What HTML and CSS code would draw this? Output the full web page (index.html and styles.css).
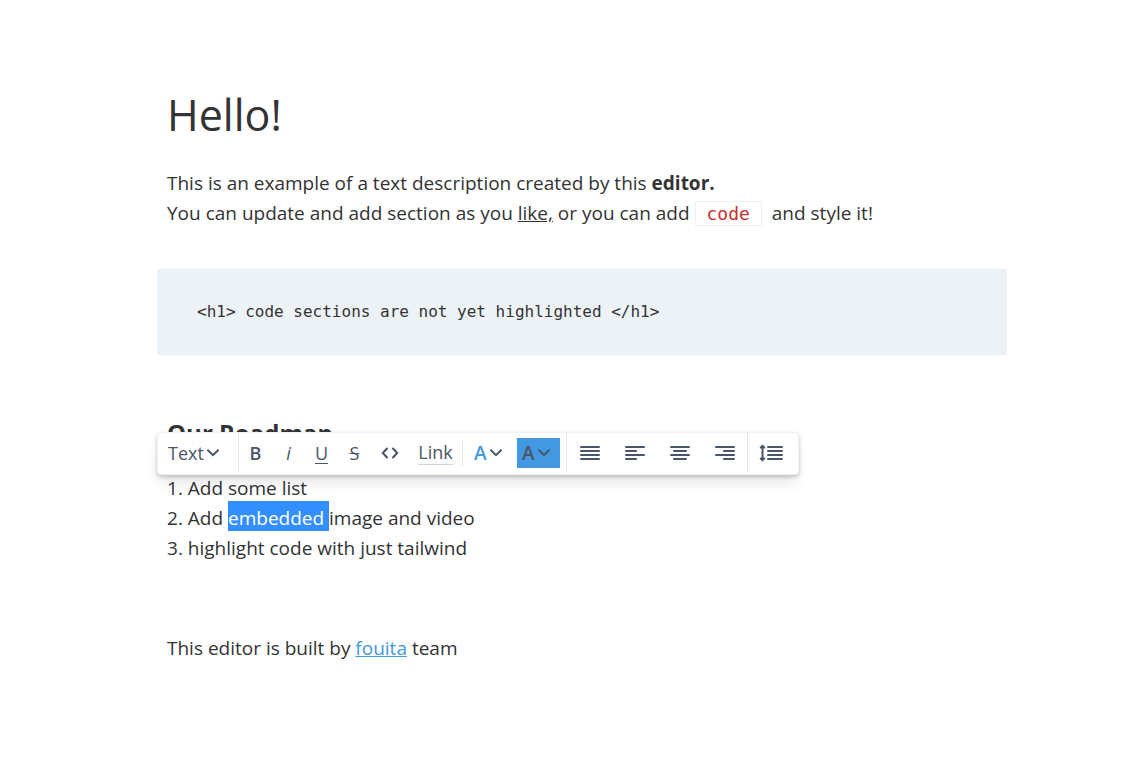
FILE: index.html
```html
<!DOCTYPE html>
<html lang="en">
<head>
    <meta charset="UTF-8">
    <meta name="viewport" content="width=device-width, initial-scale=1.0">
    <title>Text Editor</title>
    <link rel="stylesheet" href="styles.css">
</head>
<body>
    <main class="editor">
        <h1>Hello!</h1>
        <p>This is an example of a text description created by this <b>editor.</b><br>
            You can update and add section as you <u>like,</u> or you can add <code class="inline-code">code</code> and style it!</p>
        <pre class="code-block">&lt;h1&gt; code sections are not yet highlighted &lt;/h1&gt;</pre>
        <section class="roadmap">
            <h2>Our Roadmap</h2>
            <div class="toolbar" role="toolbar" aria-label="Formatting">
                <div class="group group-type">
                    <button type="button" class="dropdown">Text<svg class="chevron" width="12" height="8" viewBox="0 0 12 8"><path d="M1 1.2L6 6.2L11 1.2"/></svg></button>
                </div>
                <div class="group">
                    <button type="button" class="tool bold">B</button>
                    <button type="button" class="tool italic">i</button>
                    <button type="button" class="tool underline">U</button>
                    <button type="button" class="tool strike">S</button>
                    <button type="button" class="tool tool-code" aria-label="Code"><svg width="18" height="12" viewBox="0 0 18 12"><path d="M6 1.500L1.800 6L6 10.500M12 1.500L16.200 6L12 10.500"/></svg></button>
                    <button type="button" class="tool tool-link"><span>Link</span></button>
                </div>
                <div class="group-color">
                    <button type="button" class="dropdown color">A<svg class="chevron" width="12" height="8" viewBox="0 0 12 8"><path d="M1 1.2L6 6.2L11 1.2"/></svg></button>
                    <button type="button" class="dropdown highlight">A<svg class="chevron" width="12" height="8" viewBox="0 0 12 8"><path d="M1 1.2L6 6.2L11 1.2"/></svg></button>
                </div>
                <div class="group">
                    <button type="button" class="align" aria-label="Justify"><svg width="20" height="16" viewBox="0 0 20 16"><path d="M1 2H19M1 6H19M1 10H19M1 14H19"/></svg></button>
                    <button type="button" class="align" aria-label="Align left"><svg width="20" height="16" viewBox="0 0 20 16"><path d="M1 2H19M1 6H11M1 10H19M1 14H11"/></svg></button>
                    <button type="button" class="align" aria-label="Align center"><svg width="20" height="16" viewBox="0 0 20 16"><path d="M1 2H19M4 6H16M1 10H19M4 14H16"/></svg></button>
                    <button type="button" class="align" aria-label="Align right"><svg width="20" height="16" viewBox="0 0 20 16"><path d="M1 2H19M9 6H19M1 10H19M9 14H19"/></svg></button>
                </div>
                <div class="group">
                    <button type="button" class="align spacing" aria-label="Line height"><svg width="24" height="18" viewBox="0 0 24 18"><path d="M9 3H23M9 7H23M9 11H23M9 15H23M3.500 2V16M1.800 3.500L3.500 1.800L5.200 3.500M1.800 14.500L3.500 16.200L5.200 14.500"/></svg></button>
                </div>
            </div>
            <ol>
                <li>Add some list</li>
                <li>Add <span class="selected">embedded </span>image and video</li>
                <li>highlight code with just tailwind</li>
            </ol>
        </section>
        <p class="credit">This editor is built by <a href="#">fouita</a> team</p>
    </main>
</body>
</html>
```
FILE: styles.css
```css
* {
    box-sizing: border-box;
}

body {
    margin: 0;
    padding: 85px 0 40px 20px;
    background-color: #fff;
    color: #333;
    font-family: "Open Sans", "Noto Sans", sans-serif;
    font-size: 19px;
    line-height: 30px;
}

.editor {
    max-width: 850px;
    margin: 0 auto;
}

h1,
h2,
p,
ol {
    margin: 0;
    padding: 0 10px;
}

h1 {
    font-size: 43px;
    line-height: 60px;
    font-weight: 400;
    margin-bottom: 23px;
}

h2 {
    font-size: 24px;
    line-height: 36px;
    font-weight: 700;
}

.inline-code {
    margin-right: 5px;
    padding: 1px 11px;
    border: 1px solid #edf2f7;
    color: #c53030;
    font-family: "DejaVu Sans Mono", monospace;
    font-size: 18px;
}

.code-block {
    margin: 40px 0 60px;
    padding: 28px 40px;
    background-color: #edf2f7;
    font-family: "DejaVu Sans Mono", monospace;
    font-size: 16px;
}

.roadmap {
    position: relative;
}

ol {
    margin-top: 22px;
    list-style: none;
    counter-reset: item;
}

li::before {
    counter-increment: item;
    content: counter(item) ". ";
}

.selected {
    padding-top: 4px;
    background-color: #338fff;
    color: #fff;
}

.credit {
    margin-top: 70px;
}

a {
    color: #4299e1;
}

/* floating toolbar */
.toolbar {
    position: absolute;
    top: 17px;
    left: 0;
    display: flex;
    align-items: center;
    height: 43px;
    padding-bottom: 2px;
    border: 1px solid #edf2f7;
    border-radius: 4px;
    background-color: #fff;
    box-shadow: 0 10px 15px -3px rgba(0, 0, 0, 0.1), 0 2px 4px rgba(0, 0, 0, 0.2);
    color: #4a5568;
}

.group {
    display: flex;
    align-items: center;
    height: 100%;
}

.group + .group,
.group-color + .group {
    border-left: 1px solid #e2e8f0;
}

.toolbar button {
    display: flex;
    align-items: center;
    justify-content: center;
    height: 30px;
    padding: 0;
    border: none;
    background: none;
    color: inherit;
    font-family: inherit;
    font-size: 18px;
    line-height: 24px;
    cursor: pointer;
}

.toolbar svg {
    fill: none;
    stroke: #4a5568;
    stroke-width: 2;
    stroke-linecap: round;
}

.toolbar .chevron {
    margin-left: 3px;
}

.group-type {
    width: 80px;
    padding-left: 10px;
}

.toolbar .tool {
    width: 33px;
}

.toolbar .bold {
    font-weight: 600;
}

.toolbar .italic {
    font-style: italic;
}

.toolbar .underline {
    text-decoration: underline;
    text-underline-offset: 3px;
}

.toolbar .strike {
    text-decoration: line-through;
}

.toolbar .tool-code {
    width: 38px;
}

.toolbar .tool-link {
    width: 53px;
}

.tool-link span {
    border-bottom: 1px solid #cbd5e0;
}

.group-color {
    display: flex;
    align-items: center;
    justify-content: space-between;
    width: 104px;
    height: 26px;
    padding: 0 6px;
    border-left: 1px solid #e2e8f0;
}

.toolbar .color,
.toolbar .highlight {
    justify-content: flex-start;
    width: 43px;
    padding-left: 5px;
    font-size: 19px;
    font-weight: 600;
}

.toolbar .color {
    color: #4299e1;
}

.toolbar .highlight {
    background-color: #4299e1;
}

.toolbar .align {
    width: 45px;
}

.toolbar .spacing {
    width: 50px;
    padding-right: 4px;
}
```
